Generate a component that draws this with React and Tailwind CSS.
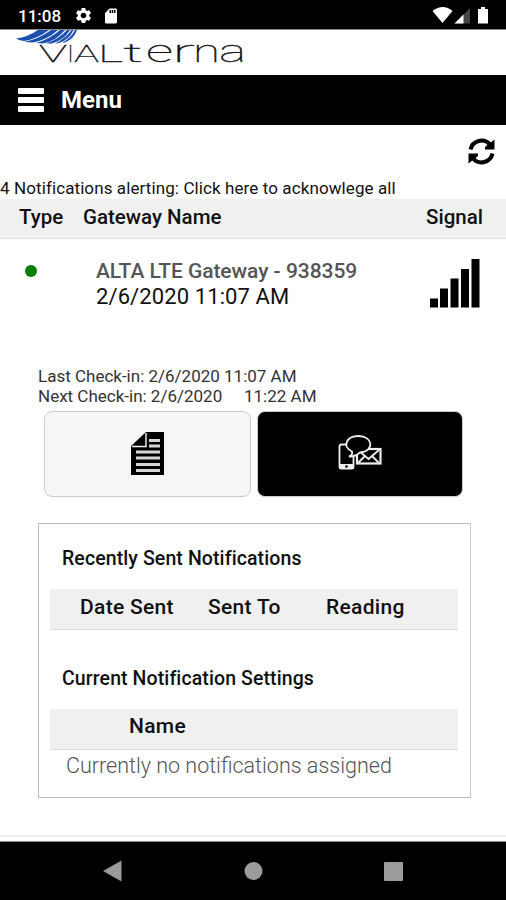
import { MdSettings, MdSdCard } from "react-icons/md";

const SIGNAL_BARS = [
    { x: 0, h: 9 },
    { x: 10, h: 19 },
    { x: 20.5, h: 29 },
    { x: 31, h: 38.5 },
    { x: 41.5, h: 48.5 },
];

// wide wordmark, every letter has its own stretch
const WORDMARK = [
    { char: "V", x: 39, width: 28, size: 24 },
    { char: "I", x: 67, width: 7, size: 24 },
    { char: "A", x: 74, width: 25, size: 24 },
    { char: "L", x: 98, width: 25, size: 24 },
    { char: "t", x: 123, width: 20, size: 25 },
    { char: "e", x: 146, width: 27, size: 32 },
    { char: "r", x: 172, width: 23, size: 32 },
    { char: "n", x: 193, width: 27, size: 32 },
    { char: "a", x: 219, width: 27, size: 32 },
];

function StatusBar() {
    return (
        <div className="flex h-[29px] items-center justify-between bg-black pl-[18px] pr-[14px] text-white">
            <div className="flex items-center pt-[2px]">
                <span className="w-[56px] text-[17px] leading-5 font-medium">11:08</span>
                <MdSettings size={19} />
                <MdSdCard size={18} className="ml-[9px]" />
            </div>
            <svg width="60" height="20" viewBox="0 0 60 20" className="mt-px">
                <path d="M0.500 6 Q11 -2 20.500 6 L10.500 18Z" fill="#fff" />
                <path d="M22.500 18.500 L38 3 V18.500Z" fill="#444" />
                <path d="M22.500 18.500 L31.500 9.500 V18.500Z" fill="#fff" />
                <path d="M46 4 H49 V2 H53 V4 H56 V18.500 H46Z" fill="#fff" />
            </svg>
        </div>
    );
}

function Logo() {
    return (
        <svg width="260" height="45" viewBox="0 0 260 45" className="block">
            <g fill="#1c4fae">
                <path d="M16 8.500 Q28 7 38 0 H49 Q37 9 24 11 Q20 10.500 16 8.500Z" />
                <path d="M24 12 Q39 9 51 0 H58 Q47 10 33 12.500Z" />
                <path d="M36 13 Q50 9 60 0 H65 Q56 11 43 13.500Z" />
                <path d="M46 13.500 Q59 9 67 0 H70 Q64 10 52 13.500Z" />
                <path d="M55 13.500 Q66 8 71.500 0 H73.500 Q69 10 59 13Z" />
                <path d="M62 13 Q71 8 75 0 H77 Q74 9 65 12.500Z" />
            </g>
            <text y="32" fontWeight="100" fill="#111" stroke="#111" strokeWidth="0.3">
                {WORDMARK.map((l) => (
                    <tspan key={l.x} x={l.x} fontSize={l.size} textLength={l.width} lengthAdjust="spacingAndGlyphs">{l.char}</tspan>
                ))}
            </text>
        </svg>
    );
}

function MenuBar() {
    return (
        <div className="flex h-[50px] items-center bg-black pl-[18px] text-white">
            <div className="flex w-[26px] flex-col gap-[3px]">
                <div className="h-[6px] rounded-[1px] bg-white"></div>
                <div className="h-[6px] rounded-[1px] bg-white"></div>
                <div className="h-[6px] rounded-[1px] bg-white"></div>
            </div>
            <span className="ml-[17px] text-[24px] font-bold">Menu</span>
        </div>
    );
}

function RefreshIcon() {
    return (
        <svg width="27" height="27" viewBox="0 0 27 27">
            <path d="M2.500 11.500 A11.300 11.300 0 0 1 22 6.500 M24.500 15.500 A11.300 11.300 0 0 1 5 20.500" fill="none" stroke="#000" strokeWidth="4" />
            <path d="M26.500 1.500 V11.500 H17 V9Z M0.500 25.500 V15.500 H10 V18Z" />
        </svg>
    );
}

function SignalIcon() {
    return (
        <svg width="50" height="49" viewBox="0 0 50 49" className="mt-px">
            {SIGNAL_BARS.map((bar) => (
                <rect key={bar.x} x={bar.x} y={48.5 - bar.h} width="8" height={bar.h} />
            ))}
        </svg>
    );
}

function DocumentIcon() {
    return (
        <svg width="34" height="43" viewBox="0 0 34 43" className="-mt-[2px]">
            <path d="M15 0 H33 V43 H0 V14Z" />
            <path d="M1 14.500 H15 V1" fill="none" stroke="#f6f6f6" strokeWidth="1.400" />
            <path d="M18 8.500 H29 M18 14 H29 M5 20 H29 M5 26 H29 M5 32.500 H29 M5 38.500 H29" stroke="#d5d5d5" strokeWidth="2.800" />
        </svg>
    );
}

function NotifyIcon() {
    return (
        <svg width="44" height="36" viewBox="0 0 44 36" fill="none" stroke="#eee" strokeWidth="1.800" className="-mt-[2px]">
            <rect x="1.500" y="9.500" width="14" height="24" rx="2" />
            <path d="M2.500 30.500 H14.500 V32.500 H2.500Z" fill="#eee" strokeWidth="3" />
            <circle cx="8.500" cy="31.500" r="1.300" fill="#000" stroke="none" />
            <rect x="19" y="14" width="23.500" height="14.500" strokeWidth="2.200" />
            <path d="M20 15 L30.500 24 L41 15 M20 28 L27 21 M41 28 L34 21" />
            <path d="M11 21.500 Q15 20 14 16.500 C4 12 8 1 20.500 1 C35 1 37 16 22 17.500 Q17 22 11 21.500Z" fill="#000" />
        </svg>
    );
}

function DetailsPanel() {
    return (
        <div className="ml-[38px] mt-[26px] h-[275px] w-[433px] border border-[#bbb] border-r-[#ccc] px-[11px]">
            <div className="mt-[21px] ml-[12px] h-[44px] text-[19.5px] leading-7 font-medium tracking-[0.1px]">Recently Sent Notifications</div>
            <div className="flex h-[41px] w-[408px] items-center border-b border-[#ddd] bg-[#f0f0f0] pb-[3px] pl-[30px] text-[21px] font-medium tracking-[0.3px]">
                <span className="w-[128px]">Date Sent</span>
                <span className="w-[118px]">Sent To</span>
                <span>Reading</span>
            </div>
            <div className="mt-[35px] ml-[12px] h-[44px] text-[19.5px] leading-7 font-medium tracking-[0.1px]">Current Notification Settings</div>
            <div className="flex h-[41px] w-[408px] items-center border-b border-[#ddd] bg-[#f0f0f0] pb-[4px] pl-[79px] text-[21px] font-medium tracking-[0.3px]">Name</div>
            <div className="-mt-[2px] ml-[16px] text-[21.5px] leading-9 font-light text-[#555]">Currently no notifications assigned</div>
        </div>
    );
}

function NavBar() {
    return (
        <div className="h-[58px] bg-black">
            <svg width="506" height="58" viewBox="0 0 506 58" fill="#9b9b9b">
                <path d="M103 29 L121.500 18.500 V39.500Z" />
                <circle cx="253.500" cy="29" r="9" />
                <rect x="384" y="20" width="19" height="19" rx="1" />
            </svg>
        </div>
    );
}

export default function App() {
    return (
        <div className="flex h-[900px] w-[506px] flex-col overflow-hidden bg-white font-['Roboto',sans-serif] text-[#111]">
            <StatusBar />
            <div className="h-[46px] border-t border-[#888]"><Logo /></div>
            <MenuBar />

            <div className="flex h-[53px] justify-end pt-[13px] pr-[11px]">
                <RefreshIcon />
            </div>
            <div className="h-[21px] text-[17px] leading-[21px] tracking-[0.1px] whitespace-nowrap">4 Notifications alerting: Click here to acknowlege all</div>

            <div className="flex h-[40px] items-center border-b border-[#ddd] bg-[#f0f0f0] pb-[3px] pl-[19px] text-[20.5px] font-medium">
                <span className="w-[64px]">Type</span>
                <span className="w-[343px]">Gateway Name</span>
                <span>Signal</span>
            </div>

            <div className="flex h-[127px] pt-[19px]">
                <div className="mt-[7px] ml-[25px] size-3 rounded-full bg-[#008000]"></div>
                <div className="mt-px ml-[59px] w-[334px]">
                    <div className="text-[21px] leading-[25px] font-medium tracking-[-0.05px] text-[#555]">ALTA LTE Gateway - 938359</div>
                    <div className="text-[22px] leading-[25px] tracking-[0.1px]">2/6/2020 11:07 AM</div>
                </div>
                <SignalIcon />
            </div>

            <div className="pl-[38px] text-[17px] leading-5 text-[#333]">
                <div>Last Check-in: 2/6/2020 11:07 AM</div>
                <div className="flex"><span className="w-[206px]">Next Check-in: 2/6/2020</span><span>11:22 AM</span></div>
            </div>
            <div className="mt-[5px] ml-[44px] flex gap-[6px]">
                <button className="flex h-[86px] w-[207px] items-center justify-center rounded-lg border border-[#ccc] bg-[#f6f6f6]">
                    <DocumentIcon />
                </button>
                <button className="flex h-[86px] w-[206px] items-center justify-center rounded-lg border border-[#ccc] bg-black">
                    <NotifyIcon />
                </button>
            </div>

            <DetailsPanel />
            <div className="mt-auto h-[7px] border-t-2 border-b border-t-[#eee] border-b-[#888]"></div>
            <NavBar />
        </div>
    );
}
